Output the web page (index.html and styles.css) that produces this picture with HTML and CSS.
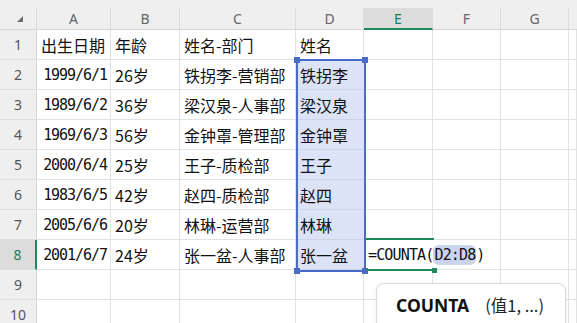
FILE: index.html
```html
<!DOCTYPE html>
<html lang="zh">
<head>
<meta charset="utf-8">
<link rel="stylesheet" href="styles.css">
</head>
<body>
<div class="app">
  <div class="strip"></div>
  <div class="sheet">
    <div class="hd corner"><span class="tri"></span></div>
    <div class="hd col">A</div>
    <div class="hd col">B</div>
    <div class="hd col">C</div>
    <div class="hd col">D</div>
    <div class="hd col active">E</div>
    <div class="hd col">F</div>
    <div class="hd col">G</div>
    <div class="hd col last"></div>

    <div class="rh">1</div><div class="c">出生日期</div><div class="c">年龄</div><div class="c">姓名-部门</div><div class="c">姓名</div><div class="c"></div><div class="c"></div><div class="c"></div><div class="c"></div>
    <div class="rh">2</div><div class="c num">1999/6/1</div><div class="c">26岁</div><div class="c">铁拐李-营销部</div><div class="c sel">铁拐李</div><div class="c"></div><div class="c"></div><div class="c"></div><div class="c"></div>
    <div class="rh">3</div><div class="c num">1989/6/2</div><div class="c">36岁</div><div class="c">梁汉泉-人事部</div><div class="c sel">梁汉泉</div><div class="c"></div><div class="c"></div><div class="c"></div><div class="c"></div>
    <div class="rh">4</div><div class="c num">1969/6/3</div><div class="c">56岁</div><div class="c">金钟罩-管理部</div><div class="c sel">金钟罩</div><div class="c"></div><div class="c"></div><div class="c"></div><div class="c"></div>
    <div class="rh">5</div><div class="c num">2000/6/4</div><div class="c">25岁</div><div class="c">王子-质检部</div><div class="c sel">王子</div><div class="c"></div><div class="c"></div><div class="c"></div><div class="c"></div>
    <div class="rh">6</div><div class="c num">1983/6/5</div><div class="c">42岁</div><div class="c">赵四-质检部</div><div class="c sel">赵四</div><div class="c"></div><div class="c"></div><div class="c"></div><div class="c"></div>
    <div class="rh">7</div><div class="c num">2005/6/6</div><div class="c">20岁</div><div class="c">林琳-运营部</div><div class="c sel">林琳</div><div class="c"></div><div class="c"></div><div class="c"></div><div class="c"></div>
    <div class="rh active">8</div><div class="c num">2001/6/7</div><div class="c">24岁</div><div class="c">张一盆-人事部</div><div class="c sel">张一盆</div><div class="c edit"><span class="formula">=COUNTA(<span class="ref">D2:D8</span>)</span></div><div class="c"></div><div class="c"></div><div class="c"></div>
    <div class="rh">9</div><div class="c"></div><div class="c"></div><div class="c"></div><div class="c"></div><div class="c"></div><div class="c"></div><div class="c"></div><div class="c"></div>
    <div class="rh">10</div><div class="c"></div><div class="c"></div><div class="c"></div><div class="c"></div><div class="c"></div><div class="c"></div><div class="c"></div><div class="c"></div>
  </div>

  <div class="selbox">
    <span class="hdl tl"></span><span class="hdl tr"></span><span class="hdl bl"></span><span class="hdl br"></span>
  </div>
  <div class="editbox"><span class="fill"></span></div>

  <div class="tip"><b>COUNTA</b><span class="args">(值1, ...)</span></div>
</div>
</body>
</html>
```

FILE: styles.css
```css
* { box-sizing: border-box; }
html, body { margin: 0; padding: 0; background: #fff; overflow: hidden; }
.app {
  position: relative;
  width: 577px;
  height: 323px;
  overflow: hidden;
  font-family: "Noto Sans CJK SC", "Noto Sans", sans-serif;
  color: #111;
}
.strip { height: 8px; background: #efefef; }
.sheet {
  display: grid;
  grid-template-columns: 37px 74px 69px 116px 68px 69px 68px 68px 8px;
  grid-template-rows: 22px repeat(10, 30px);
}
.hd {
  background: #efefef;
  border-right: 1px solid #dadada;
  border-bottom: 1px solid #d6d6d6;
  display: flex;
  align-items: center;
  justify-content: center;
  font-family: "Noto Sans", sans-serif;
  font-size: 14px;
  color: #666;
}
.hd.last { border-right: none; }
.hd.active {
  background: #dcdcdc;
  color: #1f7d55;
  border-bottom: 2px solid #1f8a5a;
}
.corner { position: relative; }
.tri {
  position: absolute;
  left: 17px;
  top: 8px;
  width: 0; height: 0;
  border-left: 6px solid transparent;
  border-bottom: 6px solid #6f6f6f;
}
.rh {
  background: #efefef;
  border-right: 1px solid #d6d6d6;
  border-bottom: 1px solid #dedede;
  display: flex;
  align-items: center;
  justify-content: center;
  font-family: "Noto Sans", sans-serif;
  font-size: 14px;
  color: #555;
}
.rh.active {
  background: #dcdcdc;
  color: #1f7d55;
  border-right: 2px solid #1f8a5a;
}
.c {
  border-right: 1px solid #e2e2e2;
  border-bottom: 1px solid #e2e2e2;
  display: flex;
  align-items: center;
  padding: 0 3px 0 4px;
  font-size: 16px;
  white-space: nowrap;
  overflow: visible;
  color: #111;
}
.c.num {
  justify-content: flex-end;
  font-family: "DejaVu Sans Mono", monospace;
  font-size: 15px;
  letter-spacing: -1.05px;
  padding-right: 3px;
}
.c.sel { background: #dde3f6; border-bottom-color: #cdd4ea; }
.c.edit {
  position: relative;
  z-index: 2;
  border-right-color: transparent;
}
.formula {
  font-family: "DejaVu Sans Mono", monospace;
  font-size: 15px;
  letter-spacing: -0.85px;
  color: #111;
}
.ref {
  background: #cbd4ee;
  border-radius: 6px;
  padding: 1px 1px;
}
.selbox {
  position: absolute;
  left: 296px;
  top: 59px;
  width: 70px;
  height: 213px;
  border: 2px solid #4a6bc6;
  pointer-events: none;
  z-index: 3;
}
.hdl {
  position: absolute;
  width: 6px;
  height: 6px;
  background: #4a6bc6;
}
.hdl.tl { left: -4px; top: -4px; }
.hdl.tr { right: -4px; top: -4px; }
.hdl.bl { left: -4px; bottom: -4px; }
.hdl.br { right: -4px; bottom: -4px; }
.editbox {
  position: absolute;
  left: 366px;
  top: 238px;
  width: 68px;
  height: 33px;
  border-top: 2px solid #1f8a5a;
  border-bottom: 2px solid #1f8a5a;
  z-index: 3;
}
.fill {
  position: absolute;
  right: -3px;
  bottom: -4px;
  width: 5px;
  height: 5px;
  background: #1f8a5a;
}
.tip {
  position: absolute;
  left: 376px;
  top: 283px;
  width: 190px;
  height: 60px;
  background: #fff;
  border: 1px solid #d9d9d9;
  border-radius: 8px;
  box-shadow: 0 1px 4px rgba(0,0,0,0.08);
  z-index: 5;
  padding: 10px 0 0 19px;
  display: flex;
  align-items: flex-start;
  white-space: nowrap;
}
.tip b {
  font-family: "Noto Sans", sans-serif;
  font-weight: 700;
  font-size: 17.5px;
  color: #111;
  line-height: 22px;
}
.tip .args {
  margin-left: 16px;
  font-family: "Noto Sans CJK SC", sans-serif;
  font-size: 16.5px;
  line-height: 22px;
  color: #222;
}
```
